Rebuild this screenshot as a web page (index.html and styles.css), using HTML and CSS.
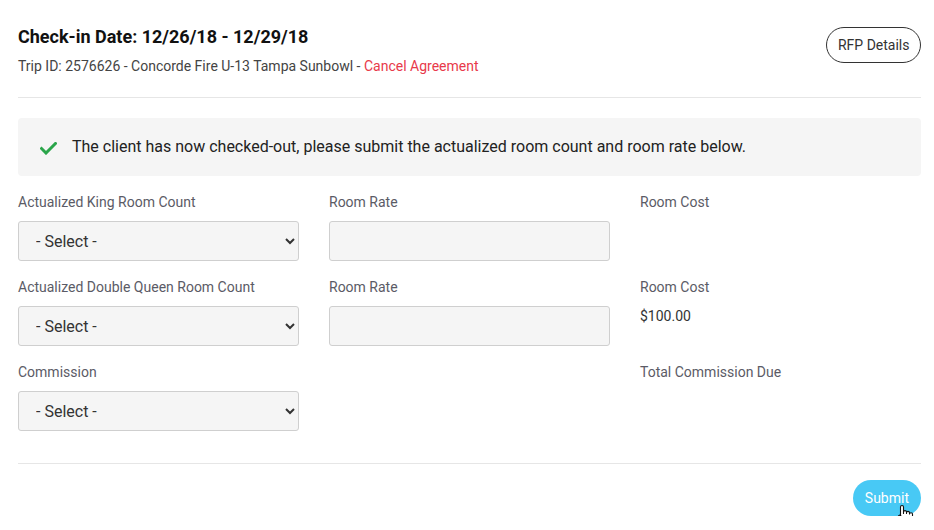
FILE: index.html
```html
<!DOCTYPE html>
<html lang="en">
<head>
<meta charset="utf-8">
<title>Check-in</title>
<link rel="stylesheet" href="styles.css">
</head>
<body>
<div class="page">
  <header class="header">
    <div class="header-text">
      <h1 class="title">Check-in Date: 12/26/18 - 12/29/18</h1>
      <p class="trip">Trip ID: 2576626 - Concorde Fire U-13 Tampa Sunbowl - <a class="cancel" href="#">Cancel Agreement</a></p>
    </div>
    <button class="btn-outline">RFP Details</button>
  </header>
  <hr class="divider">
  <div class="alert">
    <svg class="check" width="17" height="13" viewBox="0 0 17 13"><path d="M1.5 6.5 L6 11 L15.5 1.5" fill="none" stroke="#2aa54a" stroke-width="3" stroke-linecap="square"/></svg>
    <span>The client has now checked-out, please submit the actualized room count and room rate below.</span>
  </div>
  <div class="grid">
    <div class="field">
      <label class="label">Actualized King Room Count</label>
      <select class="control"><option>- Select -</option></select>
    </div>
    <div class="field">
      <label class="label">Room Rate</label>
      <input class="control" type="text">
    </div>
    <div class="field">
      <label class="label">Room Cost</label>
    </div>
    <div class="field">
      <label class="label">Actualized Double Queen Room Count</label>
      <select class="control"><option>- Select -</option></select>
    </div>
    <div class="field">
      <label class="label">Room Rate</label>
      <input class="control" type="text">
    </div>
    <div class="field">
      <label class="label">Room Cost</label>
      <div class="value">$100.00</div>
    </div>
    <div class="field">
      <label class="label">Commission</label>
      <select class="control"><option>- Select -</option></select>
    </div>
    <div class="field"></div>
    <div class="field">
      <label class="label">Total Commission Due</label>
    </div>
  </div>
  <hr class="divider divider-bottom">
  <div class="footer">
    <div class="submit-wrap">
      <button class="btn-submit">Submit</button>
      <svg class="cursor" width="18" height="22" viewBox="0 0 18 22">
        <path d="M5 1.5 C5.8 1.5 6.5 2.2 6.5 3 L6.5 9.5 L6.5 8 C6.5 7.2 7.2 6.6 8 6.6 C8.8 6.6 9.5 7.2 9.5 8 L9.5 9.5 L9.5 8.8 C9.5 8 10.2 7.4 11 7.4 C11.8 7.4 12.5 8 12.5 8.8 L12.5 10 C12.5 9.3 13.2 8.7 14 8.7 C14.8 8.7 15.5 9.3 15.5 10 L15.5 15 C15.5 18 13.5 20.5 10.5 20.5 L8.5 20.5 C6.5 20.5 5.3 19.5 4.3 18 L1.5 13.5 C1 12.7 1.3 11.8 2 11.4 C2.7 11 3.5 11.3 3.9 11.9 L3.5 11.3 L3.5 3 C3.5 2.2 4.2 1.5 5 1.5 Z" fill="#fff" stroke="#111" stroke-width="1.1" stroke-linejoin="round"/>
        <path d="M8 14 V17.5 M10.5 14 V17.5 M13 14 V17.5" stroke="#111" stroke-width="1"/>
      </svg>
    </div>
  </div>
</div>
</body>
</html>
```

FILE: styles.css
```css
* { box-sizing: border-box; }
html, body { margin: 0; padding: 0; background: #fff; }
body { font-family: Roboto, "Noto Sans", "Liberation Sans", sans-serif; color: #333; }
.page { padding: 0 13px 0 18px; }
.header { display: flex; justify-content: space-between; align-items: flex-start; padding-top: 26px; }
.title { margin: 0; font-size: 18px; line-height: 22px; font-weight: 700; color: #111; }
.trip { margin: 8px 0 0; font-size: 14px; line-height: 20px; color: #444; }
.cancel { color: #e8394a; text-decoration: none; }
.btn-outline { margin-top: 1px; height: 36px; padding: 0 10.5px; border: 1px solid #333; border-radius: 18px; background: #fff; font-family: inherit; font-size: 14px; color: #333; }
.divider { border: 0; border-top: 1px solid #e6e6e6; margin: 21px 0 0; }
.alert { margin-top: 20px; background: #f5f5f5; border-radius: 4px; padding: 17px 22px; display: flex; align-items: center; gap: 15px; font-size: 16px; line-height: 24px; color: #222; }
.check { flex: none; margin-top: 2px; }
.grid { display: grid; grid-template-columns: repeat(3, 281px); column-gap: 30px; row-gap: 16px; margin-top: 16px; }
.field { display: flex; flex-direction: column; min-height: 69px; }
.label { font-size: 14px; line-height: 20px; color: #5b5b66; }
.control { margin-top: 9px; height: 40px; width: 281px; background: #f5f5f5; border: 1px solid #cfcfcf; border-radius: 3px; font-family: inherit; font-size: 16px; color: #333; padding: 0 12px 0 13px; }
.value { margin-top: 9px; font-size: 14px; line-height: 20px; color: #333; }
.divider-bottom { margin-top: 32px; }
.footer { display: flex; justify-content: flex-end; padding-top: 16px; }
.submit-wrap { position: relative; }
.btn-submit { height: 36px; padding: 0 12px; border: 0; border-radius: 18px; background: #48c9f5; color: #fff; font-family: inherit; font-size: 14px; }
.cursor { position: absolute; left: 44px; top: 24px; }
```
